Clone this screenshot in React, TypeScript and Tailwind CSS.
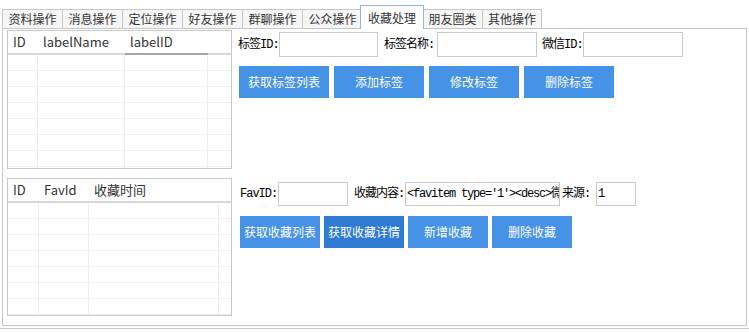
import React from "react";

const tabs = ["资料操作", "消息操作", "定位操作", "好友操作", "群聊操作", "公众操作", "收藏处理", "朋友圈类", "其他操作"];
const active = 6;

const cjk = "[font-family:Noto_Sans_CJK_SC,sans-serif]";
const song = "[font-family:Liberation_Mono,Noto_Sans_CJK_SC,monospace]";

interface Col {
  label: string;
  w: string;
  dark?: boolean;
}

function Grid({ cols, height }: { cols: Col[]; height: string }) {
  return (
    <div className={`w-[225px] ${height} shrink-0 border border-[#c8c8c8] bg-white overflow-hidden flex flex-col`}>
      <div className="flex h-[24px] shrink-0">
        {cols.map((c) => (
          <div
            key={c.label}
            className={`${c.w} shrink-0 flex items-center pl-[5px] border-b-2 ${c.dark ? "border-[#a6a6a6]" : "border-[#d6d6d6]"} text-[13px] text-[#333] ${cjk}`}
          >
            {c.label}
          </div>
        ))}
        <div className="flex-1 border-b-2 border-[#d6d6d6]" />
      </div>
      {Array.from({ length: 8 }).map((_, i) => (
        <div key={i} className="flex h-[16px] shrink-0 border-b border-[#f1f1f1]">
          {cols.map((c) => (
            <div key={c.label} className={`${c.w} shrink-0 border-r border-[#ededed]`} />
          ))}
          <div className="flex-1" />
        </div>
      ))}
    </div>
  );
}

function Label({ text, className }: { text: string; className: string }) {
  return (
    <span className={`${className} shrink-0 whitespace-nowrap text-[12px] text-black ${song} tracking-[-1px]`}>
      {text}
    </span>
  );
}

function Field({ className, value }: { className: string; value?: string }) {
  return (
    <div
      className={`${className} shrink-0 border border-[#c9c9c9] bg-white flex items-center pl-[1px] overflow-hidden whitespace-nowrap text-[12px] text-black ${song} tracking-[-1.2px]`}
    >
      {value}
    </div>
  );
}

function Btn({ text, w, dark }: { text: string; w: string; dark?: boolean }) {
  return (
    <button
      className={`${w} h-[32px] shrink-0 ${dark ? "bg-[#2f7ad3]" : "bg-[#4592e6]"} text-white text-[12px] ${cjk} flex items-center justify-center`}
    >
      {text}
    </button>
  );
}

export default function App() {
  return (
    <div className="w-[749px] h-[333px] bg-white overflow-hidden">
      <div className="flex items-end h-[28px] pl-[2px]">
        {tabs.map((t, i) =>
          i === active ? (
            <div
              key={t}
              className={`relative z-10 -mx-[2px] -mb-px w-[64px] h-[24px] bg-white border-t border-l border-r border-[#90b6dc] flex items-center justify-center text-[12px] text-[#333] ${cjk}`}
            >
              {t}
            </div>
          ) : (
            <div
              key={t}
              className={`w-[60px] h-[19px] bg-[#f6f6f6] border-t border-l ${i === tabs.length - 1 ? "border-r" : ""} border-[#c6c6c6] flex items-center justify-center text-[12px] text-[#333] ${cjk}`}
            >
              {t}
            </div>
          )
        )}
      </div>
      <div className="ml-[2px] w-[745px] h-[298px] border border-[#c6c6c6] pl-[4px] pt-[1px]">
        <div className="flex">
          <Grid
            height="h-[139px]"
            cols={[
              { label: "ID", w: "w-[30px]" },
              { label: "labelName", w: "w-[87px]" },
              { label: "labelID", w: "w-[83px]", dark: true },
            ]}
          />
          <div className="ml-[6px] pt-[2px] flex flex-col">
            <div className="flex items-center">
              <Label text="标签ID:" className="w-[41px]" />
              <Field className="w-[99px] h-[25px]" />
              <Label text="标签名称:" className="ml-[6px] w-[53px]" />
              <Field className="w-[100px] h-[25px]" />
              <Label text="微信ID:" className="ml-[5px] w-[41px]" />
              <Field className="w-[100px] h-[25px]" />
            </div>
            <div className="flex gap-[5px] ml-[1px] mt-[9px]">
              <Btn text="获取标签列表" w="w-[90px]" />
              <Btn text="添加标签" w="w-[90px]" />
              <Btn text="修改标签" w="w-[90px]" />
              <Btn text="删除标签" w="w-[90px]" />
            </div>
          </div>
        </div>
        <div className="flex mt-[9px]">
          <Grid
            height="h-[138px]"
            cols={[
              { label: "ID", w: "w-[31px]" },
              { label: "FavId", w: "w-[50px]" },
              { label: "收藏时间", w: "w-[130px]" },
            ]}
          />
          <div className="ml-[6px] pt-[4px] flex flex-col">
            <div className="flex items-center">
              <Label text="FavID:" className="pl-[2px] w-[40px]" />
              <Field className="w-[70px] h-[24px]" />
              <Label text="收藏内容:" className="ml-[6px] w-[51px]" />
              <Field className="w-[155px] h-[24px]" value="<favitem type='1'><desc>微" />
              <Label text="来源:" className="ml-[2px] w-[34px]" />
              <Field className="w-[40px] h-[24px]" value="1" />
            </div>
            <div className="flex gap-[4px] ml-[2px] mt-[10px]">
              <Btn text="获取收藏列表" w="w-[80px]" />
              <Btn text="获取收藏详情" w="w-[80px]" dark />
              <Btn text="新增收藏" w="w-[80px]" />
              <Btn text="删除收藏" w="w-[80px]" />
            </div>
          </div>
        </div>
      </div>
      <div className="mt-[2px] border-t border-[#c6c6c6]" />
    </div>
  );
}
